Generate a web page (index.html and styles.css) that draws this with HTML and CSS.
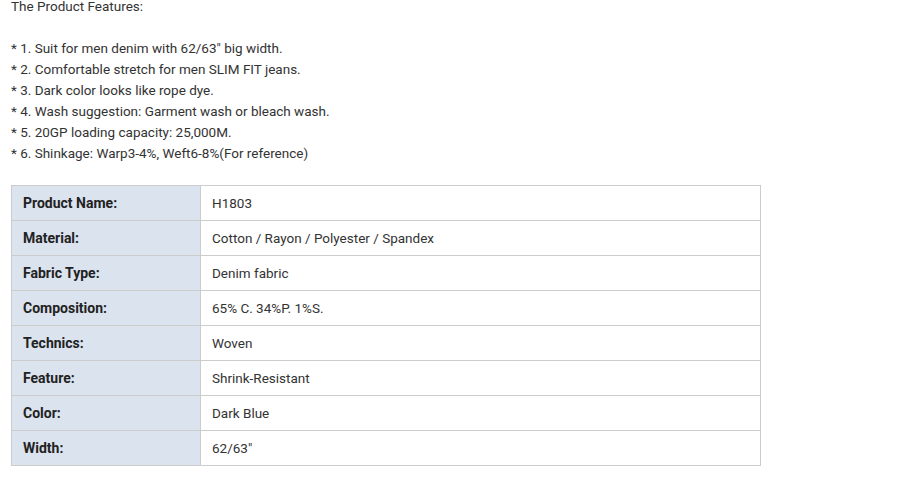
FILE: index.html
```html
<!DOCTYPE html>
<html>
<head>
<meta charset="utf-8">
<link rel="stylesheet" href="styles.css">
</head>
<body>
<div class="content">
  <p class="lead">The Product Features:</p>
  <p class="blank">&nbsp;</p>
  <ul class="features">
    <li>* 1. Suit for men denim with 62/63" big width.</li>
    <li>* 2. Comfortable stretch for men SLIM FIT jeans.</li>
    <li>* 3. Dark color looks like rope dye.</li>
    <li>* 4. Wash suggestion: Garment wash or bleach wash.</li>
    <li>* 5. 20GP loading capacity: 25,000M.</li>
    <li>* 6. Shinkage: Warp3-4%, Weft6-8%(For reference)</li>
  </ul>
  <table class="spec">
    <tr><th>Product Name:</th><td>H1803</td></tr>
    <tr><th>Material:</th><td>Cotton / Rayon / Polyester / Spandex</td></tr>
    <tr><th>Fabric Type:</th><td>Denim fabric</td></tr>
    <tr><th>Composition:</th><td>65% C. 34%P. 1%S.</td></tr>
    <tr><th>Technics:</th><td>Woven</td></tr>
    <tr><th>Feature:</th><td>Shrink-Resistant</td></tr>
    <tr><th>Color:</th><td>Dark Blue</td></tr>
    <tr><th>Width:</th><td>62/63"</td></tr>
  </table>
</div>
</body>
</html>
```

FILE: styles.css
```css
html, body {
  margin: 0;
  padding: 0;
  background: #fff;
}
body {
  font-family: Roboto, "Liberation Sans", sans-serif;
  font-size: 13.5px;
  line-height: 21px;
  color: #333;
}
.content {
  padding: 0 11px;
  margin-top: -4px;
}
.lead, .blank {
  margin: 0;
}
.features {
  list-style: none;
  margin: 0 0 21px 0;
  padding: 0;
}
.spec {
  border-collapse: collapse;
  width: 750px;
}
.spec th, .spec td {
  border: 1px solid #cccccc;
  height: 35px;
  padding: 0 11px;
  text-align: left;
  vertical-align: middle;
  box-sizing: border-box;
}
.spec th {
  width: 189px;
  background: #dbe3ee;
  font-weight: bold;
  font-size: 14px;
  color: #222;
}
.spec td {
  color: #333;
}
```
